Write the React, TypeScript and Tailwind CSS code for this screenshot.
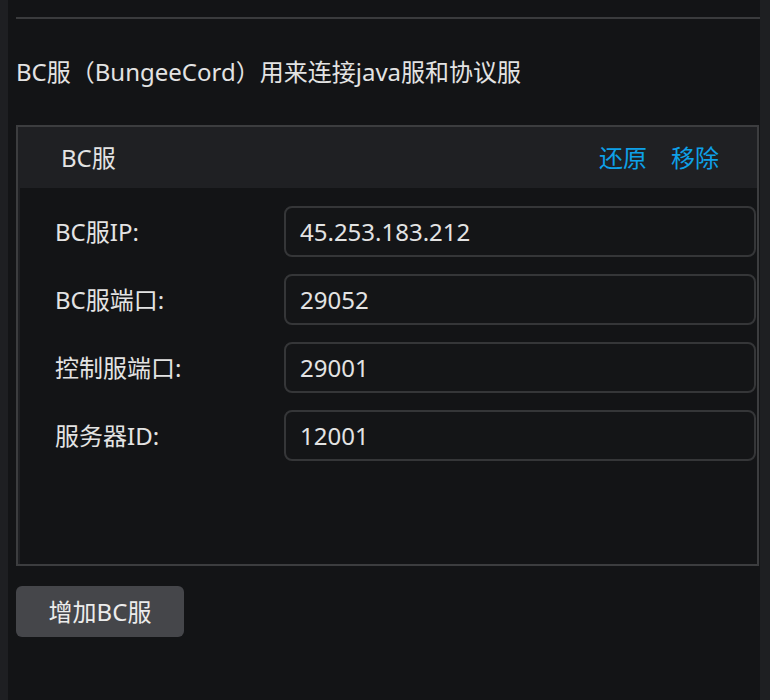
const fields = [
  { label: "BC服IP:", value: "45.253.183.212" },
  { label: "BC服端口:", value: "29052" },
  { label: "控制服端口:", value: "29001" },
  { label: "服务器ID:", value: "12001" },
];

export default function App() {
  return (
    <div
      className="flex h-[700px] w-[770px] bg-[#131416] text-[#e3e3e3]"
      style={{ fontFamily: '"Noto Sans", "Noto Sans CJK SC", sans-serif' }}
    >
      <div className="w-[8px] shrink-0 bg-[#1e1f22]" />
      <div className="flex flex-1 flex-col pl-[8px] pt-[17px]">
        <div className="h-[2px] bg-[#3a3b3d]" />
        <div className="flex h-[106px] items-center text-[24px] leading-none">
          BC服（BungeeCord）用来连接java服和协议服
        </div>

        <div className="mr-[1px] flex h-[441px] flex-col border-2 border-[#3c3d3f] bg-[#1f2023]">
          <div className="flex h-[61px] shrink-0 items-center justify-between pl-[43px] pr-[38px] text-[24px]">
            <span>BC服</span>
            <div className="flex gap-[24px] text-[#0ea0e8]">
              <button>还原</button>
              <button>移除</button>
            </div>
          </div>
          <div className="ml-[2px] flex-1 bg-[#131416] pl-[35px] pr-[1px] pt-[18px]">
            <div className="grid grid-cols-[229px_1fr] gap-y-[17px]">
              {fields.map((f) => (
                <div key={f.label} className="contents">
                  <div className="flex items-center text-[24px]">{f.label}</div>
                  <div className="flex h-[51px] items-center rounded-[8px] border-2 border-[#353638] bg-[#141517] pl-[14px] text-[24px]">
                    {f.value}
                  </div>
                </div>
              ))}
            </div>
          </div>
        </div>

        <button className="mt-[20px] flex h-[51px] w-[168px] items-center justify-center rounded-[6px] bg-[#45464a] text-[24px] text-[#ececec]">
          增加BC服
        </button>
      </div>
      <div className="w-[10px] shrink-0 bg-[#1e1f22]" />
    </div>
  );
}
